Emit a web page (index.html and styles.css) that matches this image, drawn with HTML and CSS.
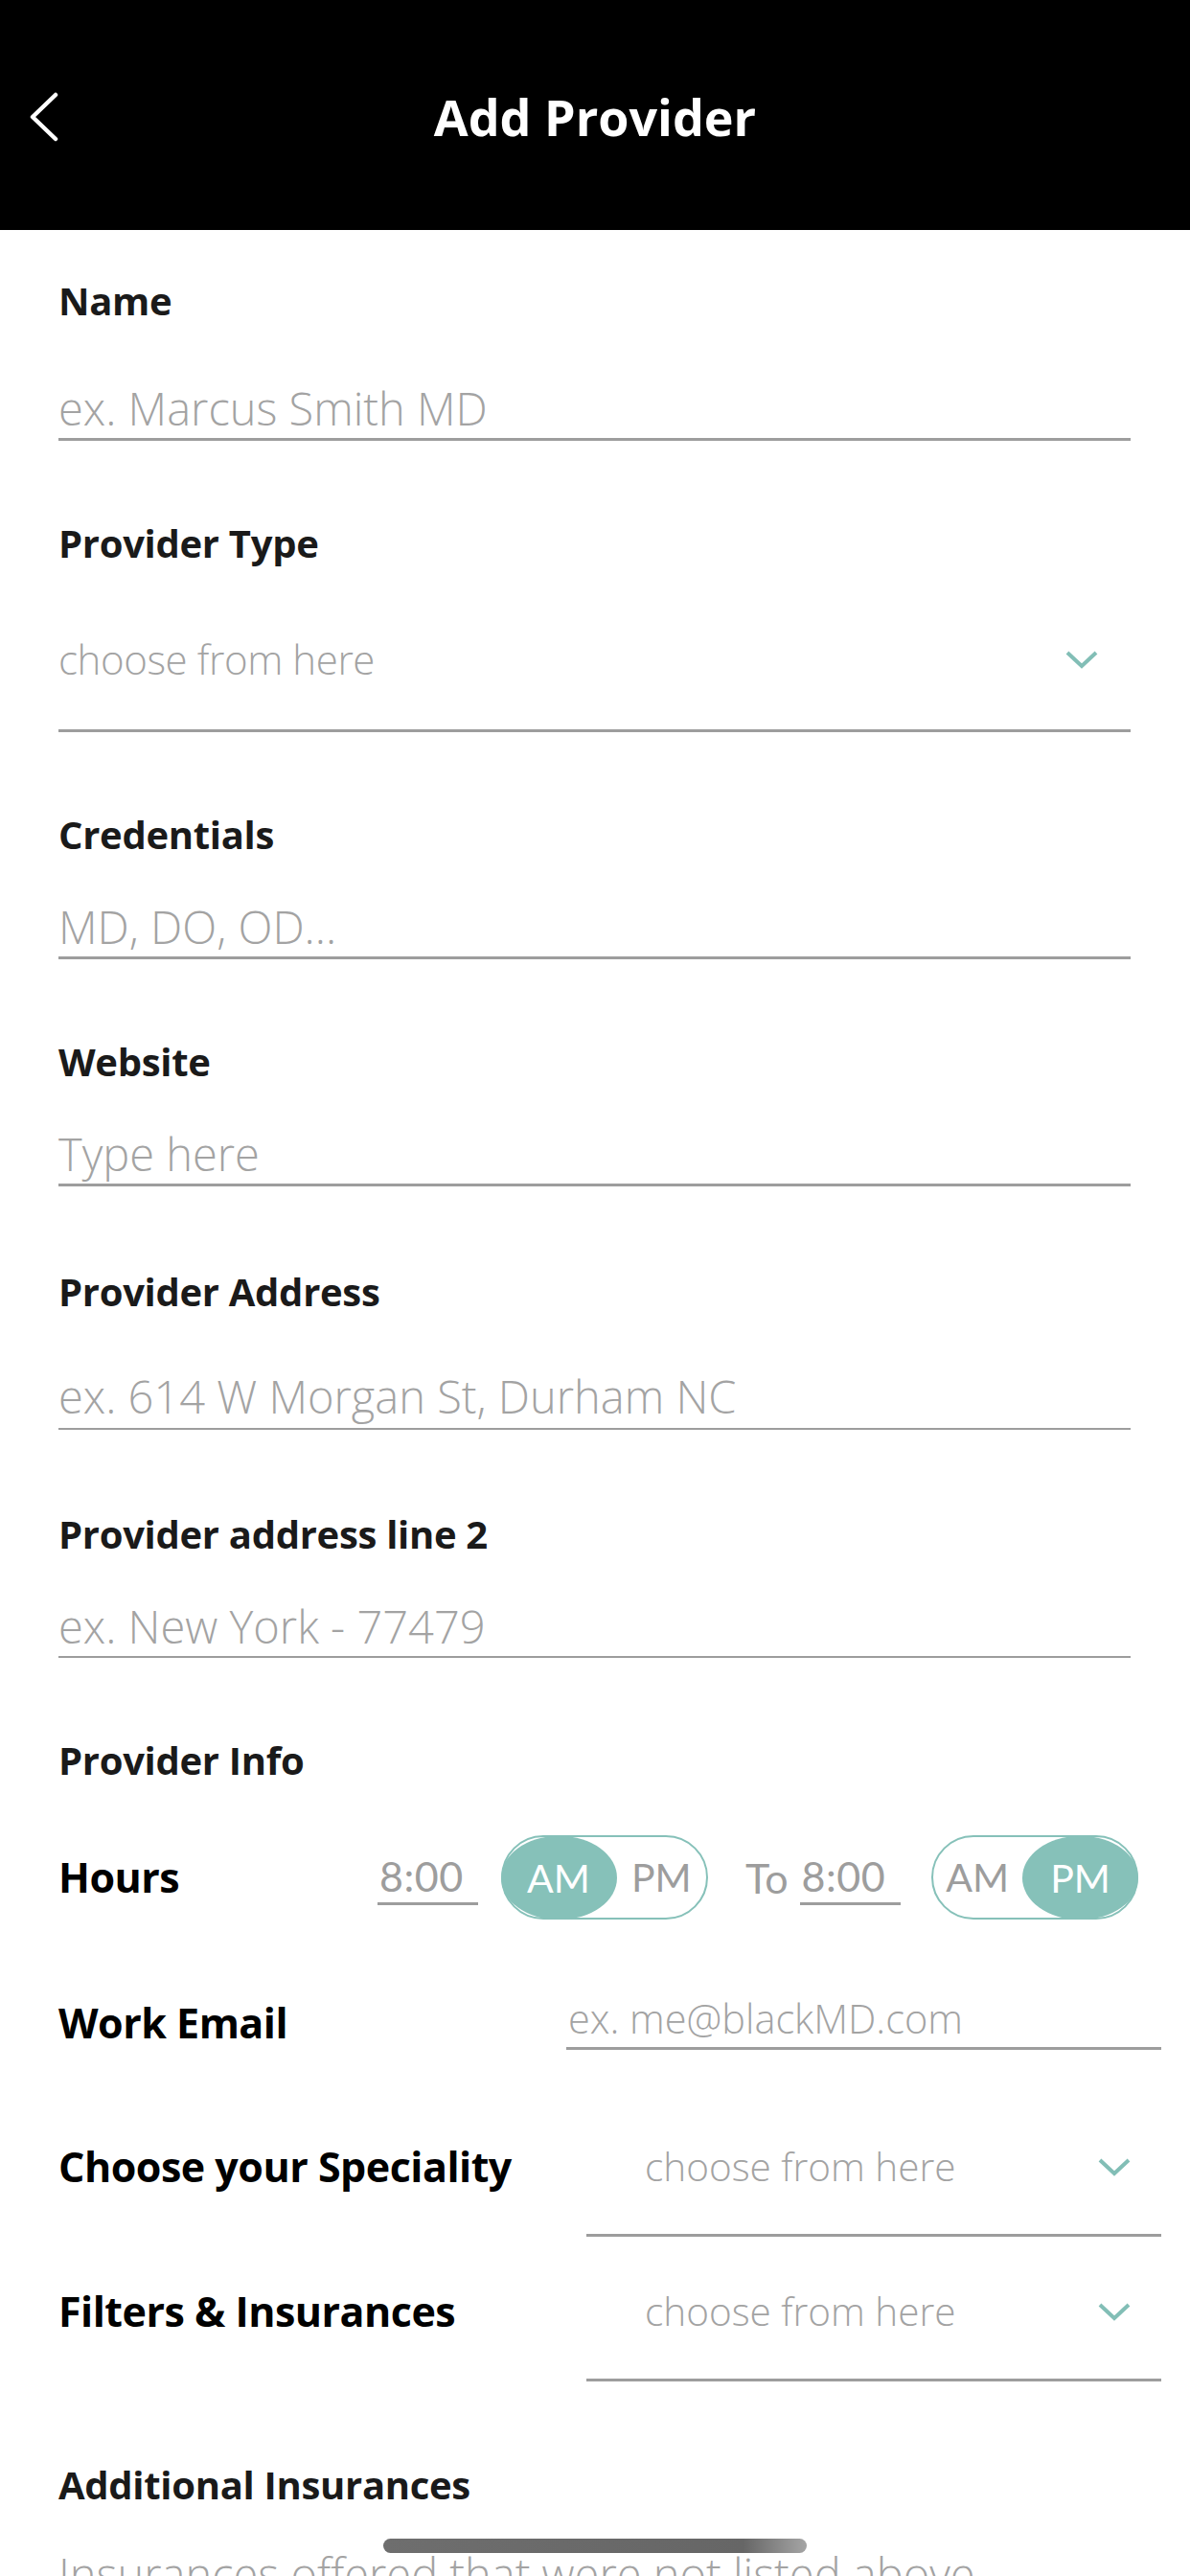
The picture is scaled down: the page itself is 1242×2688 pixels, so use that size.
FILE: index.html
```html
<!DOCTYPE html>
<html lang="en">
<head>
<meta charset="utf-8">
<title>Add Provider</title>
<link rel="stylesheet" href="styles.css">
</head>
<body>
<div class="screen">
  <header class="nav">
    <svg class="back" width="34" height="54" viewBox="0 0 34 54" aria-hidden="true">
      <polyline points="28,3 4,26 28,49" fill="none" stroke="#fff" stroke-width="4.5" stroke-linecap="round" stroke-linejoin="round"/>
    </svg>
    <h1 class="title">Add Provider</h1>
  </header>

  <main class="form">
    <div class="field field--first">
      <div class="label">Name</div>
      <div class="input input--tall"><span class="ph">ex. Marcus Smith MD</span></div>
    </div>

    <div class="field">
      <div class="label">Provider Type</div>
      <div class="select select--full">
        <span class="ph">choose from here</span>
        <svg class="chev" width="36" height="20" viewBox="0 0 36 20" aria-hidden="true"><polyline points="3,3 18,17 33,3" fill="none" stroke="#82beb6" stroke-width="4"/></svg>
      </div>
    </div>

    <div class="field">
      <div class="label">Credentials</div>
      <div class="input"><span class="ph">MD, DO, OD...</span></div>
    </div>

    <div class="field">
      <div class="label">Website</div>
      <div class="input"><span class="ph">Type here</span></div>
    </div>

    <div class="field field--addr">
      <div class="label">Provider Address</div>
      <div class="input input--addr input--thin"><span class="ph">ex. 614 W Morgan St, Durham NC</span></div>
    </div>

    <div class="field field--l2">
      <div class="label">Provider address line 2</div>
      <div class="input input--thin"><span class="ph">ex. New York - 77479</span></div>
    </div>

    <div class="field field--info">
      <div class="label">Provider Info</div>
    </div>

    <div class="row row--hours">
      <div class="big-label hours-label">Hours</div>
      <div class="time">8:00</div>
      <div class="toggle">
        <span class="opt opt--on">AM</span>
        <span class="opt">PM</span>
      </div>
      <span class="to">To</span>
      <div class="time">8:00</div>
      <div class="toggle toggle--pm">
        <span class="opt">AM</span>
        <span class="opt opt--on">PM</span>
      </div>
    </div>

    <div class="row row--email">
      <div class="big-label">Work Email</div>
      <div class="side-input"><span class="ph">ex. me@blackMD.com</span></div>
    </div>

    <div class="row row--select row--spec">
      <div class="big-label">Choose your Speciality</div>
      <div class="select select--side">
        <span class="ph">choose from here</span>
        <svg class="chev" width="36" height="20" viewBox="0 0 36 20" aria-hidden="true"><polyline points="3,3 18,17 33,3" fill="none" stroke="#82beb6" stroke-width="4"/></svg>
      </div>
    </div>

    <div class="row row--select row--filters">
      <div class="big-label">Filters &amp; Insurances</div>
      <div class="select select--side">
        <span class="ph">choose from here</span>
        <svg class="chev" width="36" height="20" viewBox="0 0 36 20" aria-hidden="true"><polyline points="3,3 18,17 33,3" fill="none" stroke="#82beb6" stroke-width="4"/></svg>
      </div>
    </div>

    <div class="field field--last">
      <div class="label">Additional Insurances</div>
      <div class="input input--open"><span class="ph">Insurances offered that were not listed above</span></div>
    </div>
  </main>

  <div class="home-indicator"></div>
</div>
</body>
</html>
```

FILE: styles.css
```css
* { box-sizing: border-box; }

html, body {
  margin: 0;
  padding: 0;
  background: #ffffff;
}

body {
  font-family: "Open Sans", "Noto Sans", "Liberation Sans", sans-serif;
}

.screen {
  position: relative;
  width: 1242px;
  height: 2688px;
  overflow: hidden;
  background: #ffffff;
}

/* ---------- Header ---------- */
.nav {
  height: 240px;
  background: #000;
  display: flex;
  align-items: center;
  justify-content: center;
  padding-top: 4px;
  position: relative;
}

.back {
  position: absolute;
  left: 30px;
  top: 96px;
}

.title {
  margin: 0;
  color: #fff;
  font-size: 52px;
  font-weight: 700;
  line-height: 60px;
}

/* ---------- Form ---------- */
.form {
  padding: 0 62px 0 61px;
}

.label {
  margin-top: 82px;
  font-size: 40px;
  font-weight: 700;
  line-height: 50px;
  color: #1a1a1a;
  letter-spacing: -0.3px;
}

.field--first .label { margin-top: 49px; }
.field--addr .label { margin-top: 85px; }
.field--l2 .label { margin-top: 84px; }
.field--info .label { margin-top: 82px; }
.field--last .label { margin-top: 83px; }

.ph {
  color: #a3a3a3;
  font-weight: 300;
  white-space: nowrap;
}

.input {
  margin-top: 44px;
  font-size: 47px;
  line-height: 55px;
  padding-bottom: 3px;
  border-bottom: 3px solid #9d9d9d;
}

.input--tall { margin-top: 60px; }
.input--addr { margin-top: 57px; padding-bottom: 5px; }
.input--thin { border-bottom-width: 2px; }

.input--open {
  margin-top: 41px;
  border-bottom: none;
}

.select {
  display: flex;
  align-items: center;
  justify-content: space-between;
  font-size: 42px;
  line-height: 55px;
  letter-spacing: -0.4px;
  border-bottom: 3px solid #9d9d9d;
}

.select--full {
  margin-top: 68px;
  padding: 0 33px 46px 0;
}

.chev { flex: none; }

/* ---------- Rows ---------- */
.row {
  display: flex;
}

.big-label {
  font-size: 43px;
  font-weight: 700;
  line-height: 56px;
  color: #000;
  letter-spacing: -0.5px;
  white-space: nowrap;
}

.row--hours {
  margin-top: 53px;
  height: 88px;
  align-items: center;
}

.hours-label {
  width: 333px;
  flex: none;
}

.time {
  flex: none;
  width: 105px;
  padding-left: 2px;
  font-family: "Lato", "Open Sans", sans-serif;
  font-size: 43px;
  line-height: 55px;
  color: #9d9d9d;
  border-bottom: 3px solid #9d9d9d;
  letter-spacing: 0.5px;
}

.toggle {
  flex: none;
  margin-left: 24px;
  width: 216px;
  height: 88px;
  border: 2.5px solid #86c1b9;
  border-radius: 44px;
  display: flex;
  align-items: center;
  font-family: "Lato", "Open Sans", sans-serif;
  font-size: 41px;
}

.opt {
  flex: 1 1 auto;
  text-align: center;
  color: #9d9d9d;
  line-height: 84px;
}

.opt--on {
  flex: none;
  width: 121px;
  height: 87px;
  line-height: 87px;
  background: #86c1b9;
  color: #fff;
  border-radius: 60px / 44px;
}

.toggle .opt:first-child.opt--on { margin-left: -2.5px; }
.toggle .opt:last-child.opt--on { margin-right: -2.5px; }

.to {
  flex: none;
  margin-left: 39px;
  margin-right: 12px;
  font-family: "Lato", "Open Sans", sans-serif;
  font-size: 43px;
  color: #9d9d9d;
}

.toggle--pm { margin-left: 32px; }

.row--email {
  margin-top: 77px;
  align-items: flex-end;
  justify-content: space-between;
  margin-right: -32px;
}

.side-input {
  width: 621px;
  padding-left: 2px;
  font-size: 41.5px;
  line-height: 52px;
  padding-bottom: 4px;
  border-bottom: 3px solid #9d9d9d;
}

.row--select {
  align-items: flex-start;
  justify-content: space-between;
  margin-right: -32px;
}

.row--spec { margin-top: 94px; }
.row--filters { margin-top: 50px; }

.select--side {
  width: 600px;
  margin-top: 2px;
  font-size: 40.5px;
  line-height: 52px;
  letter-spacing: 0;
  padding: 0 31px 44px 61px;
}

/* ---------- Home indicator ---------- */
.home-indicator {
  position: absolute;
  left: 400px;
  top: 2649px;
  width: 442px;
  height: 15px;
  border-radius: 8px;
  background: linear-gradient(90deg, #6e6e6e 0%, #666 85%, #a5a5a5 100%);
}
```
